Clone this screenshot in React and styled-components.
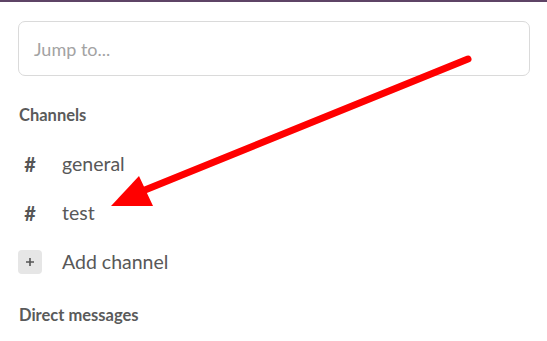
import styled, { createGlobalStyle } from "styled-components";

const GlobalStyle = createGlobalStyle`
    html, body {
        margin: 0;
        padding: 0;
        background: #ffffff;
    }
    body {
        font-family: Lato, "Liberation Sans", sans-serif;
    }
`

const Page = styled.div`
    position: relative;
    width: 547px;
    height: 341px;
    overflow: hidden;
    background: #fff;
`
const TopBar = styled.div`
    height: 2px;
    background-color: #5e4466;
`
const Sidebar = styled.div`
    display: flex;
    flex-direction: column;
    padding: 19px 17px 0 18px;
`
const Search = styled.div`
    height: 55px;
    box-sizing: border-box;
    border: 1.5px solid #dadada;
    border-radius: 7px;
    display: flex;
    align-items: center;
    padding: 0 15px;
    font-size: 18px;
    color: #a3a3a3;
`
const SectionTitle = styled.div`
    font-size: 16.5px;
    line-height: 20px;
    font-weight: 700;
    color: #5a5a5a;
    margin-top: ${p => p.top}px;
    padding-left: 1px;
`
const List = styled.div`
    display: flex;
    flex-direction: column;
    margin-top: 14px;
`
const Row = styled.div`
    height: 49px;
    display: flex;
    align-items: center;
    gap: 20px;
    font-size: 19.5px;
    line-height: 24px;
    color: #585858;
`
const IconBox = styled.div`
    width: 24px;
    height: 24px;
    display: flex;
    align-items: center;
    justify-content: center;
    border-radius: 4px;
    background: ${p => p.filled ? "#e6e6e6" : "transparent"};
    font-size: 20px;
    font-weight: 700;
    color: #555555;
`
const Arrow = styled.svg`
    position: absolute;
    left: 0;
    top: 0;
    pointer-events: none;
`

const channels = ["general", "test"]

export default function App() {
    return <Page>
        <GlobalStyle />
        <TopBar />
        <Sidebar>
            <Search>Jump to...</Search>
            <SectionTitle top={29}>Channels</SectionTitle>
            <List>
                {channels.map(c =>
                    <Row key={c}>
                        <IconBox>#</IconBox>
                        {c}
                    </Row>
                )}
                <Row>
                    <IconBox filled>
                        <svg width="10" height="10" viewBox="0 0 10 10">
                            <path d="M5 1v8M1 5h8" stroke="#555" strokeWidth="1.6" />
                        </svg>
                    </IconBox>
                    Add channel
                </Row>
            </List>
            <SectionTitle top={19}>Direct messages</SectionTitle>
        </Sidebar>
        <Arrow width="547" height="341" viewBox="0 0 547 341">
            <line x1="468" y1="59" x2="140" y2="192" stroke="#ff0000" strokeWidth="7" strokeLinecap="round" />
            <polygon points="111,206 139,176 153,206" fill="#ff0000" />
        </Arrow>
    </Page>
}
